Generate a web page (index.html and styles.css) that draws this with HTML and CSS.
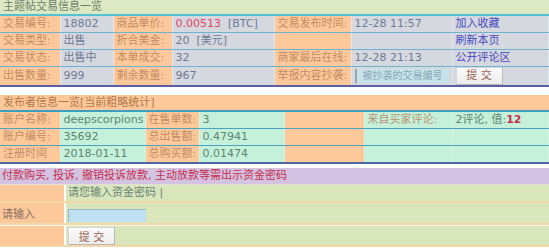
FILE: index.html
```html
<!DOCTYPE html>
<html lang="zh-CN">
<head>
    <meta charset="UTF-8">
    <title>主题帖交易信息一览</title>
    <link rel="stylesheet" href="styles.css">
</head>
<body>
    <div class="trade-box">
        <div class="trade-title">主题帖交易信息一览</div>
        <table class="trade-table">
            <colgroup>
                <col style="width:60px"><col style="width:53px"><col style="width:59px"><col style="width:102px">
                <col style="width:77px"><col style="width:101px"><col>
            </colgroup>
            <tr>
                <td class="lbl">交易编号:</td>
                <td class="val">18802</td>
                <td class="lbl">商品单价:</td>
                <td class="val"><span class="price">0.00513</span>&nbsp; [BTC]</td>
                <td class="lbl">交易发布时间:</td>
                <td class="val">12-28 11:57</td>
                <td class="val"><a href="#" class="act">加入收藏</a></td>
            </tr>
            <tr>
                <td class="lbl">交易类型:</td>
                <td class="val">出售</td>
                <td class="lbl">折合美金:</td>
                <td class="val">20 &nbsp;[美元]</td>
                <td class="lbl"></td>
                <td class="val"></td>
                <td class="val"><a href="#" class="act">刷新本页</a></td>
            </tr>
            <tr>
                <td class="lbl">交易状态:</td>
                <td class="val">出售中</td>
                <td class="lbl">本单成交:</td>
                <td class="val">32</td>
                <td class="lbl">商家最后在线:</td>
                <td class="val">12-28 21:13</td>
                <td class="val"><a href="#" class="act">公开评论区</a></td>
            </tr>
            <tr>
                <td class="lbl">出售数量:</td>
                <td class="val">999</td>
                <td class="lbl">剩余数量:</td>
                <td class="val">967</td>
                <td class="lbl">举报内容抄袭:</td>
                <td class="val"><input type="text" class="copy-input" placeholder="被抄袭的交易编号"></td>
                <td class="val"><button class="btn">提 交</button></td>
            </tr>
        </table>
    </div>

    <div class="seller-box">
        <div class="seller-title">发布者信息一览[当前粗略统计]</div>
        <table class="seller-table">
            <colgroup>
                <col style="width:60px"><col style="width:85px"><col style="width:54px"><col style="width:85px">
                <col style="width:80px"><col style="width:88px"><col>
            </colgroup>
            <tr>
                <td class="lbl">账户名称:</td>
                <td class="val">deepscorpions</td>
                <td class="lbl">在售单数:</td>
                <td class="val">3</td>
                <td class="lbl"></td>
                <td class="val muted">来自买家评论:</td>
                <td class="val">2评论, 值:<b class="score">12</b></td>
            </tr>
            <tr>
                <td class="lbl">账户编号:</td>
                <td class="val">35692</td>
                <td class="lbl">总出售额:</td>
                <td class="val">0.47941</td>
                <td class="lbl"></td>
                <td class="val"></td>
                <td class="val"></td>
            </tr>
            <tr>
                <td class="lbl">注册时间</td>
                <td class="val">2018-01-11</td>
                <td class="lbl">总购买额:</td>
                <td class="val">0.01474</td>
                <td class="lbl"></td>
                <td class="val"></td>
                <td class="val"></td>
            </tr>
        </table>
    </div>

    <div class="pay-box">
        <div class="pay-title">付款购买, 投诉, 撤销投诉放款, 主动放款等需出示资金密码</div>
        <div class="pay-row pay-hint">
            <div class="pay-lbl"></div>
            <div class="pay-val">请您输入资金密码 |</div>
        </div>
        <div class="pay-row pay-input">
            <div class="pay-lbl">请输入</div>
            <div class="pay-val"><input type="password" class="pwd-input"></div>
        </div>
        <div class="pay-row pay-submit">
            <div class="pay-lbl"></div>
            <div class="pay-val"><button class="btn">提 交</button></div>
        </div>
    </div>
</body>
</html>
```

FILE: styles.css
```css
body {
    margin: 0;
    background: #ffffff;
    font-family: "DejaVu Sans", "Noto Sans CJK SC", sans-serif;
    font-size: 11px;
    overflow: hidden;
}
table {
    border-collapse: collapse;
    table-layout: fixed;
    width: 100%;
}
td {
    padding: 0 0 0 3px;
    white-space: nowrap;
    overflow: hidden;
    height: 16px;
    line-height: 16px;
}

/* trade info */
.trade-box {
    border-bottom: 2px solid #5a5fa6;
}
.trade-title {
    height: 14px;
    line-height: 14px;
    padding-left: 3px;
    background: #dde9c5;
    color: #6f8068;
    border-bottom: 2px solid #52c3d3;
}
.trade-table td {
    border-bottom: 1px solid #6fb3d3;
    border-right: 1px solid #e2e8ee;
}
.trade-table tr:last-child td {
    border-bottom: none;
    height: 17px;
}
.trade-table .lbl {
    background: #fdc99b;
    color: #c48b63;
}
.trade-table .val {
    background: #d6d8df;
    color: #6e7a94;
}
.price {
    color: #e24560;
}
.act {
    color: #4646c0;
    text-decoration: none;
}
.copy-input {
    box-sizing: border-box;
    width: 94px;
    height: 14px;
    margin: 1px 0 0 0;
    padding: 0 0 0 6px;
    border: none;
    border-left: 2px solid #9aa6ae;
    background: #c6e2ea;
    font: inherit;
    font-size: 10px;
    vertical-align: top;
}
.copy-input::placeholder {
    color: #8aa6b4;
}
.btn {
    box-sizing: border-box;
    width: 47px;
    height: 18px;
    padding: 0;
    border: 1px solid #d6d6d6;
    border-right-color: #b8b8b8;
    border-bottom-color: #b8b8b8;
    background: linear-gradient(#fbfbfb, #ececec);
    color: #9a6050;
    font: inherit;
    font-size: 11px;
    vertical-align: top;
}

/* seller info */
.seller-box {
    margin-top: 8px;
    border-bottom: 2px solid #4d68a4;
}
.seller-title {
    height: 15px;
    line-height: 15px;
    padding-left: 3px;
    background: #fdc99b;
    color: #b3774a;
    border-bottom: 2px solid #3c9fc2;
}
.seller-table td {
    border-bottom: 1px solid #4ba3c3;
    border-right: 1px solid #d6f4e6;
}
.seller-table tr:last-child td {
    border-bottom: none;
}
.seller-table .lbl {
    background: #fdc99b;
    color: #c48b63;
}
.seller-table .val {
    background: #c5f1da;
    color: #5d8472;
}
.seller-table .muted {
    color: #b99472;
}
.score {
    color: #c4304c;
}

/* pay password */
.pay-box {
    margin-top: 4px;
}
.pay-title {
    height: 16px;
    line-height: 16px;
    padding-left: 2px;
    background: #d3c2e1;
    color: #c6304e;
    border-bottom: 1px solid #e4e0d8;
}
.pay-row {
    display: flex;
    gap: 2px;
    border-bottom: 2px solid #f4d7a6;
}
.pay-lbl {
    width: 64px;
    padding-left: 2px;
    box-sizing: border-box;
    background: #fdc99b;
    color: #8a6e62;
}
.pay-val {
    flex: 1;
    padding-left: 2px;
    background: #d9e6bb;
    color: #6b8474;
}
.pay-hint .pay-lbl,
.pay-hint .pay-val {
    height: 16px;
    line-height: 16px;
}
.pay-input .pay-lbl,
.pay-input .pay-val {
    height: 20px;
    line-height: 24px;
}
.pwd-input {
    box-sizing: border-box;
    width: 78px;
    height: 13px;
    margin-top: 6px;
    padding: 0;
    border: none;
    border-top: 1px solid #9ab8c8;
    border-left: 1px solid #9ab8c8;
    background: #bfe0f2;
    vertical-align: top;
}
.pay-submit {
    border-top: 1px solid #f4f8ea;
}
.pay-submit .pay-lbl,
.pay-submit .pay-val {
    height: 19px;
}
.pay-submit .btn {
    margin-top: 1px;
}
```
